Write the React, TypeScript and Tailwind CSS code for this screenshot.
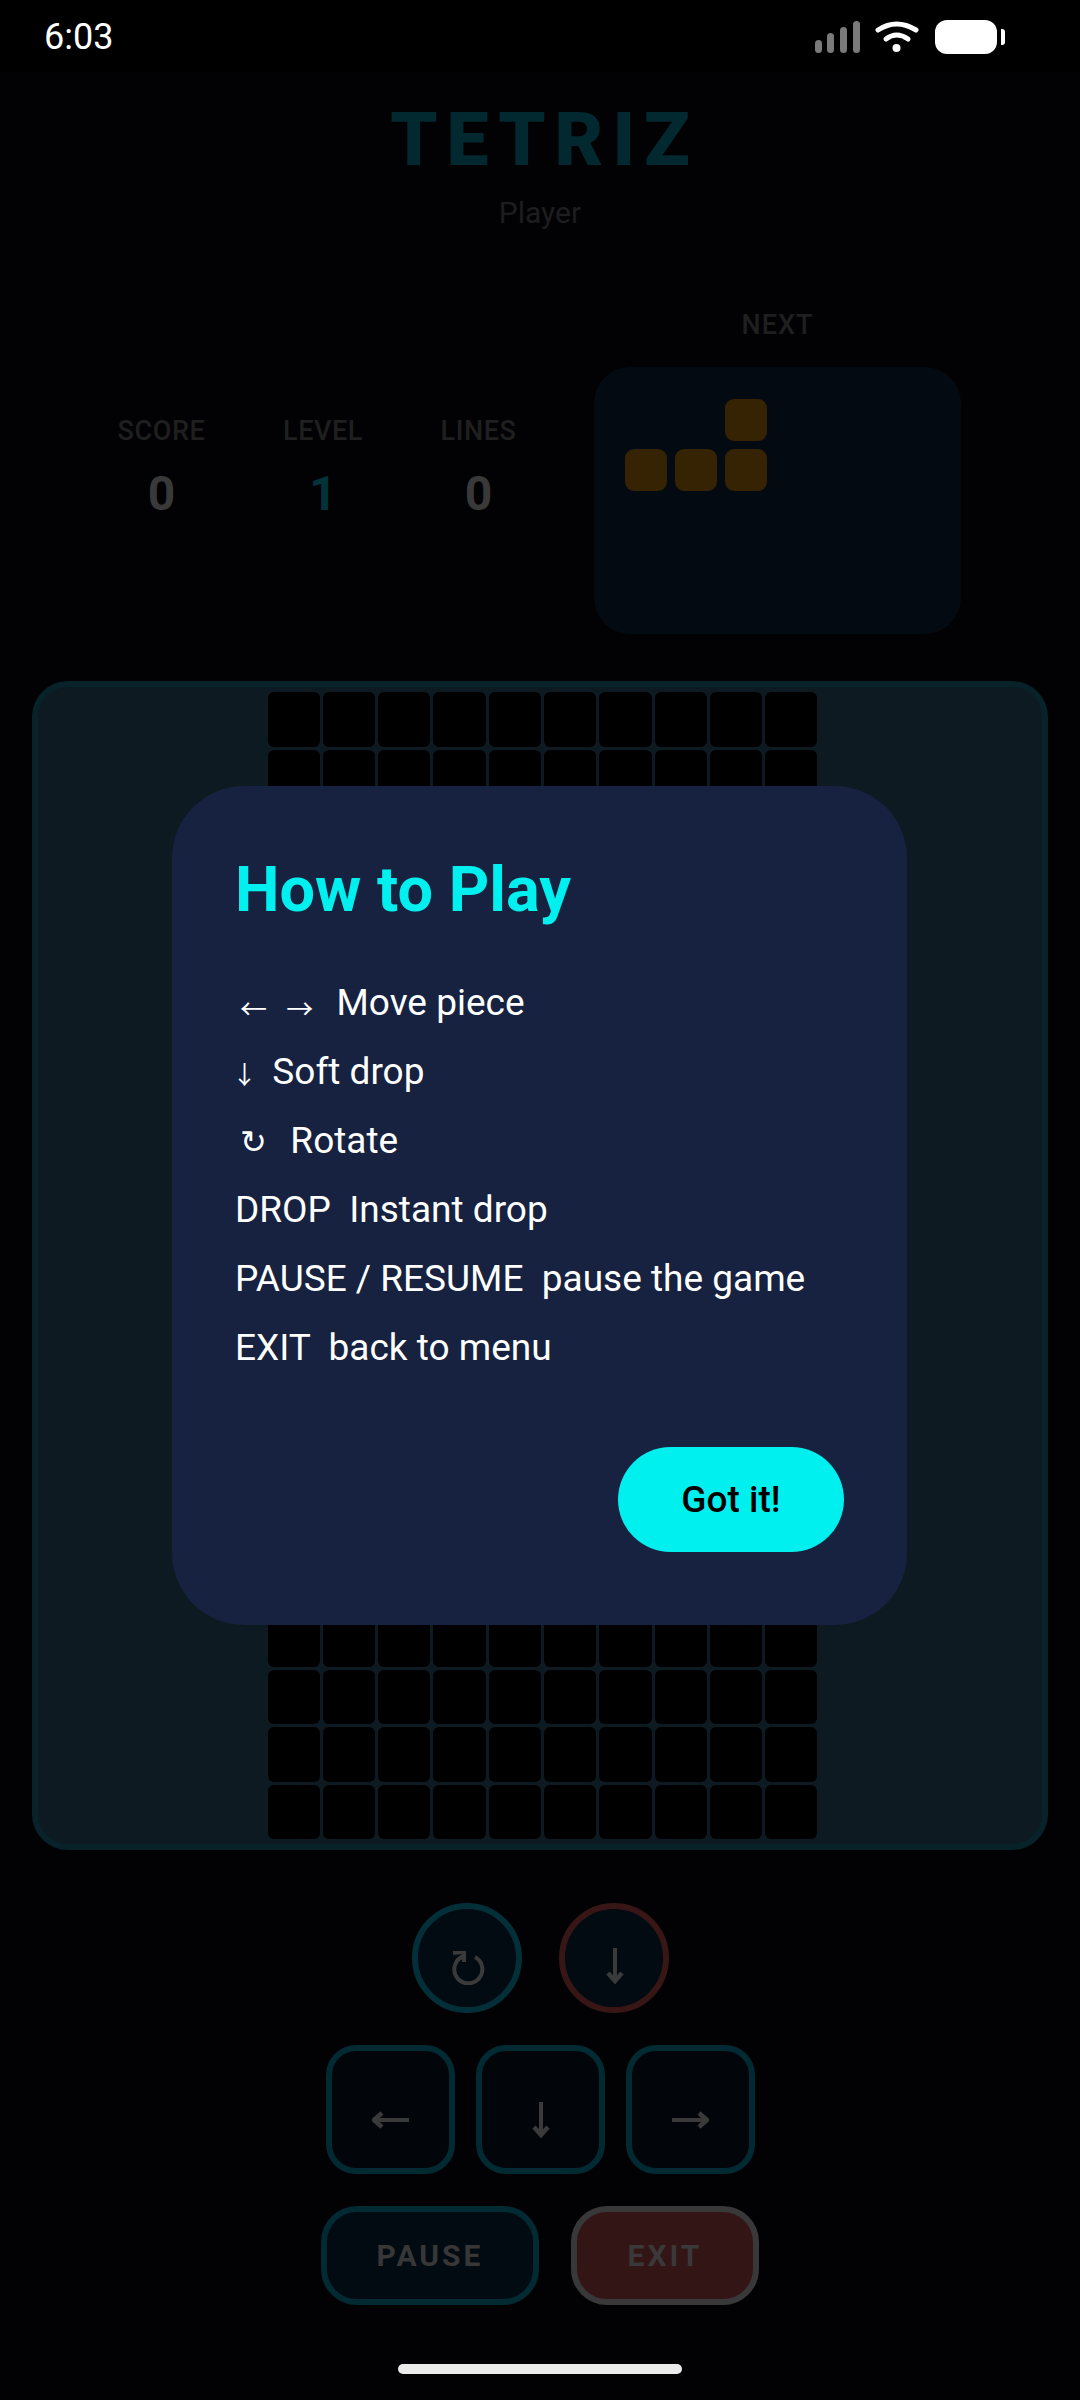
const cells = Array.from({ length: 200 }, (_, i) => i)

const statCols = [
  { label: 'SCORE', value: '0', className: 'w-[87px] text-[#393939]' },
  { label: 'LEVEL', value: '1', className: 'w-[80px] text-[#02323a]' },
  { label: 'LINES', value: '0', className: 'w-[75px] text-[#393939]' },
]

const piece = [
  [false, false, true],
  [true, true, true],
]

function Signal() {
  return (
    <svg width="45" height="34" viewBox="0 0 45 34" fill="#7a7a7a">
      <rect x="0" y="19" width="7" height="13" rx="3.5" />
      <rect x="12" y="12" width="7" height="20" rx="3.5" />
      <rect x="25" y="6" width="7" height="26" rx="3.5" />
      <rect x="38" y="0" width="7" height="32" rx="3.5" />
    </svg>
  )
}

function Wifi() {
  return (
    <svg width="44" height="33" viewBox="0 0 44 33" fill="none" stroke="#fff" strokeWidth="5" strokeLinecap="round">
      <path d="M3 10 Q21.5 -2 41 10" />
      <path d="M11 19 Q21.5 11 33 19" />
      <circle cx="21.5" cy="28" r="4" fill="#fff" stroke="none" />
    </svg>
  )
}

function Battery() {
  return (
    <div className="flex items-center gap-[4px]">
      <div className="h-[34px] w-[62px] rounded-[12px] bg-white" />
      <div className="h-[16px] w-[4px] rounded-r-[3px] bg-white" />
    </div>
  )
}

function RotateIcon() {
  return (
    <svg width="34" height="34" viewBox="0 0 34 34" fill="none" stroke="#3a3a3a" strokeWidth="4">
      <path d="M23 6 A14 14 0 1 1 12 5" />
      <path d="M1 2 L12 1 L12 11" />
    </svg>
  )
}

function ArrowDown() {
  return (
    <svg width="18" height="36" viewBox="0 0 18 36" fill="none" stroke="#3a3a3a" strokeWidth="4">
      <path d="M9 0 V32" />
      <path d="M2 25 L9 33 L16 25" strokeWidth="4.5" />
    </svg>
  )
}

function ArrowSide({ flip }: { flip?: boolean }) {
  return (
    <svg width="37" height="18" viewBox="0 0 37 18" fill="none" stroke="#3a3a3a" strokeWidth="4" className={flip ? 'rotate-180' : ''}>
      <path d="M3 9 H37" />
      <path d="M10 2 L2 9 L10 16" strokeWidth="4.5" />
    </svg>
  )
}

function HelpLine({ children }: { children: React.ReactNode }) {
  return <p className="h-[69px] whitespace-pre text-[37px] leading-[69px] text-white">{children}</p>
}

function Glyph({ children, className }: { children: string; className: string }) {
  return (
    <span className={`inline-block text-center font-['Noto_Sans_CJK_JP',sans-serif] leading-[30px] ${className}`}>
      {children}
    </span>
  )
}

export default function App() {
  return (
    <div className="relative flex h-[2400px] w-[1080px] flex-col overflow-hidden bg-[#020205] font-['Roboto',sans-serif]">
      {/* status bar */}
      <div className="flex h-[72px] items-start justify-between bg-black pl-[44px] pr-[75px]">
        <span className="mt-[16px] text-[36px] leading-[42px] text-white">6:03</span>
        <div className="mt-[20px] flex items-start gap-[16px]">
          <div className="mr-[-1px] mt-[1px]"><Signal /></div>
          <Wifi />
          <Battery />
        </div>
      </div>

      {/* title */}
      <div className="flex flex-col items-center">
        <h1 className="mt-[23px] pl-[9px] text-[75px] font-black leading-[88px] tracking-[9px] text-[#02292f]">TETRIZ</h1>
        <p className="mt-[12px] text-[30px] leading-[36px] text-[#1d1d1f]">Player</p>
      </div>

      {/* stats and next piece */}
      <div className="mt-[78px] flex pl-[118px]">
        <div className="mt-[106px] flex h-[110px] gap-[78px]">
          {statCols.map((stat) => (
            <div key={stat.label} className={`flex flex-col items-center ${stat.className}`}>
              <span className="text-[27px] font-medium leading-[32px] tracking-[0.6px] text-[#1f1f1f]">{stat.label}</span>
              <span className="mt-[19px] text-[48px] font-bold leading-[56px]">{stat.value}</span>
            </div>
          ))}
        </div>
        <div className="ml-[78px] flex w-[367px] flex-col items-center">
          <span className="text-[27px] font-medium leading-[32px] tracking-[1px] text-[#1f1f1f]">NEXT</span>
          <div className="mt-[26px] flex h-[267px] w-full flex-col gap-[8px] rounded-[36px] bg-[#030a12] pl-[31px] pt-[32px]">
            {piece.map((row, y) => (
              <div key={y} className="flex gap-[8px]">
                {row.map((on, x) => (
                  <div key={x} className={`h-[42px] w-[42px] rounded-[9px] ${on ? 'bg-[#352303]' : ''}`} />
                ))}
              </div>
            ))}
          </div>
        </div>
      </div>

      {/* board */}
      <div className="ml-[32px] mt-[47px] flex h-[1169px] w-[1016px] justify-center rounded-[36px] border-[6px] border-[#08222a] bg-[#0e1a21] pl-[5px] pt-[5px]">
        <div className="grid h-[1147px] w-[550px] grid-cols-10 grid-rows-[repeat(20,1fr)] gap-[3px]">
          {cells.map((c) => (
            <div key={c} className="rounded-[6px] bg-black" />
          ))}
        </div>
      </div>

      {/* controls */}
      <div className="mt-[53px] flex justify-center gap-[37px] pl-[1px]">
        <button className="flex h-[110px] w-[110px] items-center justify-center rounded-full border-[6px] border-[#022f38] bg-[#020a12] pl-[4px] pt-[20px]">
          <RotateIcon />
        </button>
        <button className="flex h-[110px] w-[110px] items-center justify-center rounded-full border-[6px] border-[#371615] bg-[#020a12] pl-[1px] pt-[16px]">
          <ArrowDown />
        </button>
      </div>
      <div className="mt-[32px] flex justify-center gap-[21px] pl-[1px]">
        <button className="flex h-[129px] w-[129px] items-center justify-center rounded-[30px] border-[6px] border-[#022a33] bg-[#02060b] pt-[20px]">
          <ArrowSide />
        </button>
        <button className="flex h-[129px] w-[129px] items-center justify-center rounded-[30px] border-[6px] border-[#022a33] bg-[#02060b] pt-[20px]">
          <ArrowDown />
        </button>
        <button className="flex h-[129px] w-[129px] items-center justify-center rounded-[30px] border-[6px] border-[#022a33] bg-[#02060b] pt-[20px]">
          <ArrowSide flip />
        </button>
      </div>
      <div className="mt-[32px] flex justify-center gap-[32px]">
        <button className="h-[99px] w-[218px] rounded-[36px] border-[6px] border-[#022a33] bg-[#020a12] text-[30px] font-bold tracking-[3px] text-[#373737]">
          PAUSE
        </button>
        <button className="h-[99px] w-[188px] rounded-[36px] border-[6px] border-[#383838] bg-[#331515] text-[30px] font-bold tracking-[3px] text-[#3a3838]">
          EXIT
        </button>
      </div>

      {/* home bar */}
      <div className="mx-auto mt-[59px] h-[10px] w-[284px] rounded-full bg-[#ebebeb]" />

      {/* how to play dialog */}
      <div className="absolute left-[172px] top-[786px] flex h-[839px] w-[735px] flex-col rounded-[72px] bg-[#16223f] px-[63px] pt-[60px]">
        <h2 className="text-[63px] font-bold leading-[88px] text-[#00f0f0]">How to Play</h2>
        <div className="mt-[34px] flex flex-col">
          <HelpLine>
            <Glyph className="w-[37px] align-[-4px] text-[27px]">←</Glyph>{' '}
            <Glyph className="w-[37px] align-[-4px] text-[27px]">→</Glyph>{'  Move piece'}
          </HelpLine>
          <HelpLine><Glyph className="-mx-[3px] w-[25px] text-[25px]">↓</Glyph>{'  Soft drop'}</HelpLine>
          <HelpLine><Glyph className="w-[37px] text-[32px]">↻</Glyph>{'  Rotate'}</HelpLine>
          <HelpLine>{'DROP  Instant drop'}</HelpLine>
          <HelpLine>{'PAUSE / RESUME  pause the game'}</HelpLine>
          <HelpLine>{'EXIT  back to menu'}</HelpLine>
        </div>
        <button className="ml-auto mt-[65px] h-[105px] w-[226px] rounded-full bg-[#00f0f0] text-[37px] font-medium text-black">
          Got it!
        </button>
      </div>
    </div>
  )
}
